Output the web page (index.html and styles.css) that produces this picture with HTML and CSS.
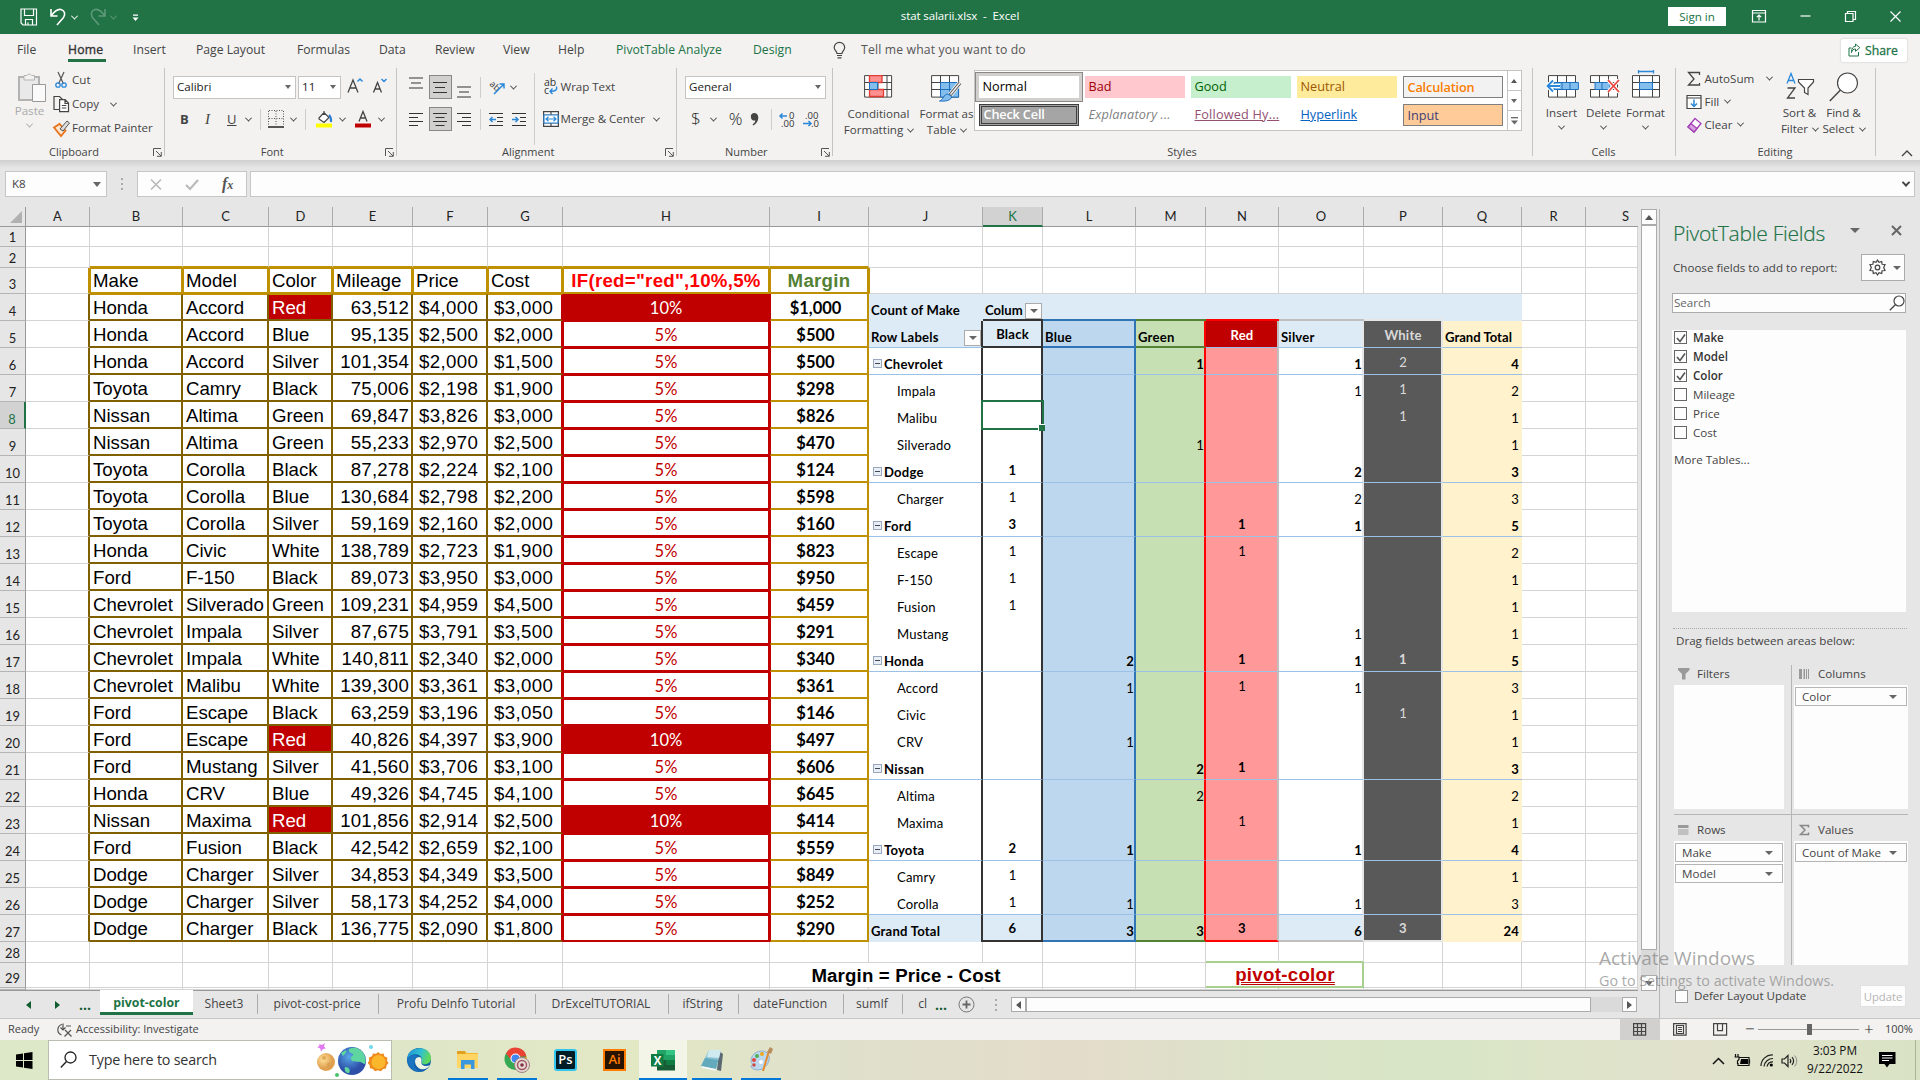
FILE: index.html
```html
<!DOCTYPE html>
<html lang="en">
<head>
<meta charset="utf-8">
<title>stat salarii.xlsx - Excel</title>
<link rel="stylesheet" href="styles.css">
</head>
<body>
<header class="titlebar">
  <div class="qat">
    <svg width="18" height="18" viewBox="0 0 18 18" class="ln"><path d="M1 1h15.5v16H3L1 15zM4.500 1v6.500h9V1M5.500 17v-5.500h7V17M8 14.500v2.500"/></svg>
    <svg width="17" height="18" viewBox="0 0 17 18" class="ln w15"><path d="M1 1v7h6.500M1 8C5 2.500 8 .8 11 1.500c4 1 4.500 5 2.500 8L7 17"/></svg>
    <i class="chev"></i>
    <svg width="17" height="18" viewBox="0 0 17 18" class="ln w15 dim"><path d="M16 1v7H9.500M16 8C12 2.500 9 .8 6 1.500 2 2.500 1.500 6.500 3.500 9.500L10 17"/></svg>
    <i class="chev dim"></i>
    <svg width="7" height="8" viewBox="0 0 7 8" class="qmore"><path d="M1 .5h5v1.300H1zM0.500 3.500h6l-3 3.500z" fill="#fff"/></svg>
  </div>
  <div class="doc">stat salarii.xlsx&nbsp; -&nbsp; Excel</div>
  <div class="winbtns">
    <span class="signin">Sign in</span>
    <svg width="14" height="13" viewBox="0 0 14 13" class="ln"><path d="M.5.500h13v11.500H.5zM.5 3h13M7 10.500V5M4.800 7.200L7 5l2.200 2.200"/></svg>
    <svg width="11" height="11" viewBox="0 0 11 11" class="ln"><path d="M.5 5h10"/></svg>
    <svg width="11" height="11" viewBox="0 0 11 11" class="ln"><path d="M.5 2.500h7.500v8H.5zM2.500 2.300V.500h8v8H8.200"/></svg>
    <svg width="11" height="11" viewBox="0 0 11 11" class="ln"><path d="M.5.500l10 10M10.500.500l-10 10"/></svg>
  </div>
</header>

<nav class="tabs">
  <span class="t-file">File</span><span class="t-home">Home</span><span class="t-insert">Insert</span><span class="t-page">Page Layout</span><span class="t-form">Formulas</span><span class="t-data">Data</span><span class="t-review">Review</span><span class="t-view">View</span><span class="t-help">Help</span><span class="t-pivot">PivotTable Analyze</span><span class="t-design">Design</span>
  <span class="t-tell"><svg width="13" height="17" viewBox="0 0 13 17"><path d="M4 11.500C4 9 1.200 8.500 1.200 5.500a5.200 5 0 0 1 10.500 0C11.700 8.500 9 9 9 11.500zM4 13.500h5M4.500 15.800h4" fill="none" stroke="#444" stroke-width="1.200"/></svg>Tell me what you want to do</span>
  <span class="share"><svg width="13" height="14" viewBox="0 0 13 14"><path d="M3.500 5H1v8h9.500V9M7.500 1l4.300 3.700-4.300 3.600V6C5.500 6 4 7 3.500 9.500c0-4 1.500-6 4-6.200z" fill="none" stroke="#217346"/></svg>Share</span>
</nav>

<section class="ribbon">
  <div class="group g-clip">
    <div class="clip-body">
      <div class="paste"><svg width="28" height="31" viewBox="0 0 28 31"><path d="M1 5h20v23H1z" fill="#e9e9e9" stroke="#b3b3b3" stroke-width="2"/><path d="M6 3.500h3a2.500 2.500 0 0 1 4.500 0h3V8H6z" fill="#f3f2f1" stroke="#b3b3b3"/><path d="M14.500 12.500h13v17h-13z" fill="#fafafa" stroke="#999"/></svg><span>Paste</span><i class="chev"></i></div>
      <div class="clip-list">
        <div><svg width="17" height="18" viewBox="0 0 17 18"><path d="M5 1l5.500 12M11 1L5.500 13" stroke="#555" stroke-width="1.200"/><circle cx="5" cy="14" r="2.200" fill="none" stroke="#2b88d8" stroke-width="1.300"/><circle cx="11" cy="14" r="2.200" fill="none" stroke="#2b88d8" stroke-width="1.300"/></svg>Cut</div>
        <div><svg width="17" height="18" viewBox="0 0 17 18"><path d="M6 14.500H1V1.500h5.500l3 3" fill="none" stroke="#444" stroke-width="1.200"/><path d="M6.600 4.600H12l3.500 3.500v8.500H6.600zM12 4.600V8.500h3.500M8.800 10.500h4.500M8.800 13h4.500" fill="#fff" stroke="#444" stroke-width="1.200"/></svg>Copy<i class="chev"></i></div>
        <div><svg width="17" height="18" viewBox="0 0 17 18"><path d="M1 8.500L6.500 5l6 6.500-4.500 5.500z" fill="#fbe6d2" stroke="#e8731a" stroke-width="1.800"/><path d="M7 10l7-8 2.500 2-6.500 8z" fill="#ddd" stroke="#555"/></svg>Format Painter</div>
      </div>
    </div>
    <footer class="has-launch">Clipboard<svg class="launch" width="9" height="9"><use href="#lnch"/></svg></footer>
  </div>

  <div class="group g-font">
    <div class="line1">
      <span class="combo c-name">Calibri<i class="caret"></i></span><span class="combo c-size">11<i class="caret"></i></span>
      <svg class="grow" width="16" height="17" viewBox="0 0 16 17"><path d="M1 15.500L6 3l5 12.500M2.800 11h6.400" fill="none" stroke="#444" stroke-width="1.300"/><path d="M10.500 4.500L13 2l2.500 2.500" class="bl"/></svg><svg class="shrink" width="16" height="17" viewBox="0 0 16 17"><path d="M1.500 15.500L5.500 5.500l4 10M3 12h5" fill="none" stroke="#444" stroke-width="1.300"/><path d="M9.500 2L12 4.500 14.500 2" class="bl"/></svg>
    </div>
    <div class="line2 font-row">
      <b>B</b><em>I</em><u>U</u><i class="chev"></i><s></s>
      <svg width="16" height="18" viewBox="0 0 16 18"><path d="M1 .5h14M1 8.500h14M.5 1v15M8 1v15M15.500 1v15" stroke="#555" stroke-dasharray="1 1.500" fill="none"/><path d="M0 17h16" stroke="#222" stroke-width="1.500"/></svg><i class="chev"></i><s class="wide"></s>
      <svg width="17" height="18" viewBox="0 0 17 18"><path d="M3 8l5-5.500 5 5L8 12.500 3 9zM8 5V1" fill="#fff" stroke="#444" stroke-width="1.200"/><path d="M13 5c2 2 2.500 3.500 2 7" stroke="#2b7cd3" stroke-width="2" fill="none"/><path d="M0 13.500h16v4H0z" fill="#ff0"/></svg><i class="chev"></i>
      <svg width="17" height="18" viewBox="0 0 17 18"><path d="M4 11.500L8 1.500l4 10M5.500 8h5.200" stroke="#444" stroke-width="1.300" fill="none"/><path d="M0 13.500h16v4H0z" fill="#c00000"/></svg><i class="chev"></i>
    </div>
    <footer class="has-launch">Font<svg class="launch" width="9" height="9"><use href="#lnch"/></svg></footer>
  </div>

  <div class="group g-align">
    <div class="al-left">
      <div class="line1 al-row">
        <span class="ab"><svg width="14" height="13"><path d="M0 1h14M2 6h10M0 11h14"/></svg></span><span class="ab on"><svg width="14" height="13"><path d="M0 1.500h14M2 6.500h10M0 11.500h14"/></svg></span><span class="ab low"><svg width="14" height="13"><path d="M0 1h14M2 6h10M0 11h14"/></svg></span><s></s>
        <svg class="orient" width="17" height="16" viewBox="0 0 17 16"><text x="1" y="7" font-size="9" transform="rotate(42 2 5)" fill="#333">ab</text><path d="M5 15L15 5M10.500 5H15v4.500" stroke="#2b88d8" stroke-width="1.500" fill="none"/></svg><i class="chev"></i>
      </div>
      <div class="line2 al-row">
        <span class="ab"><svg width="14" height="13"><path d="M0 .5h14M0 4.500h9M0 8.500h14M0 12.500h9"/></svg></span><span class="ab on"><svg width="14" height="13"><path d="M0 .5h14M2.500 4.500h9M0 8.500h14M2.500 12.500h9"/></svg></span><span class="ab"><svg width="14" height="13"><path d="M0 .5h14M5 4.500h9M0 8.500h14M5 12.500h9"/></svg></span><s></s>
        <svg class="ind" width="15" height="13"><path d="M0 .5h14M8 4.500h6M8 8.500h6M0 12.500h14"/><path d="M7 6.500H1M3.500 4L1 6.500 3.500 9" class="bl"/></svg><svg class="ind" width="15" height="13"><path d="M0 .5h14M8 4.500h6M8 8.500h6M0 12.500h14"/><path d="M0 6.500h6M3.500 4L6 6.500 3.500 9" class="bl"/></svg>
      </div>
    </div>
    <div class="al-right">
      <div class="line1"><svg width="16" height="18" viewBox="0 0 16 18"><text x="1" y="8" font-size="10.500" fill="#333">ab</text><text x="1" y="16" font-size="10.500" fill="#333">c</text><path d="M13.500 8.500c1 3-1 5-6 4.800M9.500 10.500l-2.500 2.700L9.500 16" fill="none" stroke="#2b88d8" stroke-width="1.400"/></svg>Wrap Text</div>
      <div class="line2"><svg width="16" height="16" viewBox="0 0 16 16"><path d="M.6.600h14.800v14.800H.6zM.6 4h14.800M.6 12h14.800M8 .6V4M8 12v3.400" fill="#fff" stroke="#444" stroke-width="1.200"/><path d="M1 4h14v8H1z" fill="#fff" stroke="#2b88d8" stroke-width="1.200"/><path d="M3 8h10M5.500 5.800L3 8l2.500 2.200M10.500 5.800L13 8l-2.500 2.200" fill="none" stroke="#2b88d8" stroke-width="1.200"/></svg>Merge &amp; Center<i class="chev"></i></div>
    </div>
    <footer class="has-launch">Alignment<svg class="launch" width="9" height="9"><use href="#lnch"/></svg></footer>
  </div>

  <div class="group g-num">
    <div class="line1"><span class="combo c-gen">General<i class="caret"></i></span></div>
    <div class="line2 num-row"><span class="sym">$</span><i class="chev"></i><span class="sym">%</span><svg class="comma" width="10" height="13" viewBox="0 0 10 13"><path d="M4 0c2.800 0 4.300 1.800 4.300 4.500 0 3.500-2 6.500-5 8l-.8-1c1.800-1.200 2.800-2.500 2.900-4A3.700 3.700 0 1 1 4 0z" fill="#444"/></svg><s></s>
    <svg width="16" height="17" viewBox="0 0 16 17"><text x="10" y="8" font-size="9.500" fill="#333">0</text><text x="2" y="16" font-size="9.500" fill="#333">.00</text><path d="M8 5H1M3.500 2.500L1 5l2.500 2.500" class="bl"/></svg>
    <svg width="16" height="17" viewBox="0 0 16 17"><text x="2" y="8" font-size="9.500" fill="#333">.00</text><text x="8" y="16" font-size="9.500" fill="#333">.0</text><path d="M0 12.500h8M5.500 10L8 12.500 5.500 15" class="bl"/></svg></div>
    <footer class="has-launch">Number<svg class="launch" width="9" height="9"><use href="#lnch"/></svg></footer>
  </div>

  <div class="group g-styles">
    <div class="big b-cond"><svg width="29" height="23" viewBox="0 0 29 23"><path d="M.6.600h27v21.500H.6zM.6 7.500h27M.6 14.500h27M5.500.6v21.500M14 .6v21.500M23 .6v21.500" fill="#fff" stroke="#444"/><path d="M5.500.6H18v6.900H5.500zM5.500 14.500h14v7h-14z" fill="#ff9090" stroke="#e03c31" stroke-width="1.300"/><path d="M5.500 7.500h8v7h-8z" fill="#83beec" stroke="#1e70c1"/></svg><span>Conditional</span><span>Formatting<i class="chev"></i></span></div>
    <div class="big b-table"><svg width="31" height="27" viewBox="0 0 31 27"><path d="M.6.600h27v21.500H.6zM.6 7.500h27M.6 14.500h27M9.500.6v21.500M18.500.6v21.500" fill="#fff" stroke="#444"/><path d="M9.500 7.500h18v14.600h-18zM9.500 14.500h18M18.500 7.500v14.600" fill="#83beec" stroke="#1e70c1"/><path d="M29 8L19 20" stroke="#fff" stroke-width="5"/><path d="M29 8L19 20" stroke="#555" stroke-width="3.500"/><path d="M29 8L19.500 19.500" stroke="#eee" stroke-width="1.500"/><path d="M17 19l3.500 2.500c0 4-6 5-12 4.500 4-1 4-7 8.500-7z" fill="#83beec" stroke="#1e70c1"/></svg><span>Format as</span><span>Table<i class="chev"></i></span></div>
    <div class="gallery">
      <div class="gal-cells">
        <span class="normal">Normal</span><span class="bad">Bad</span><span class="good">Good</span><span class="neutral">Neutral</span><span class="calc">Calculation</span>
        <span class="check">Check Cell</span><span class="expl">Explanatory ...</span><span class="foll">Followed Hy...</span><span class="hyper">Hyperlink</span><span class="input">Input</span>
      </div>
      <div class="gal-scroll"><span><i class="caret up"></i></span><span><i class="caret"></i></span><span class="more"><svg width="7" height="8"><path d="M0 .7h7" stroke="#666" stroke-width="1.300"/><path d="M0 3.500h7L3.500 7.500z" fill="#666"/></svg></span></div>
    </div>
    <footer>Styles</footer>
  </div>

  <div class="group g-cells">
    <div class="big"><svg width="33" height="28" viewBox="0 0 33 28"><path d="M2.500 5.600h27v21.500h-27zM2.500 12.500h27M2.500 19.500h27M11.500 5.600v21.500M20.500 5.600v21.500" fill="#fff" stroke="#444"/><path d="M8 12.500h24.400v7H8zM16 12.500v7M24 12.500v7" fill="#83beec" stroke="#1e70c1"/><path d="M14 16H1.500M7 10.500L1.500 16 7 21.500" fill="none" stroke="#fff" stroke-width="4"/><path d="M14 16H1.500M7 10.500L1.500 16 7 21.500" fill="none" stroke="#2b88d8" stroke-width="1.800"/></svg><span>Insert</span><i class="chev"></i></div>
    <div class="big"><svg width="33" height="28" viewBox="0 0 33 28"><path d="M2.500 5.600h27v21.500h-27zM2.500 12.500h27M2.500 19.500h27M11.500 5.600v21.500M20.500 5.600v21.500" fill="#fff" stroke="#444"/><path d="M7 12.500h15v7H7zM14 12.500v7" fill="#83beec" stroke="#1e70c1"/><path d="M0 13h6v6H0z" fill="#f3f2f1"/><path d="M20 10l11 12M31 10L20 22" stroke="#fff" stroke-width="4"/><path d="M20 10l11 12M31 10L20 22" stroke="#e8453c" stroke-width="1.800"/></svg><span>Delete</span><i class="chev"></i></div>
    <div class="big"><svg width="33" height="28" viewBox="0 0 33 28"><path d="M2.500 5.600h27v21.500h-27zM2.500 12.500h27M2.500 19.500h27M9.500 5.600v21.500M22.500 5.600v21.500" fill="#fff" stroke="#444"/><path d="M9.500 12.500h13v7h-13z" fill="#83beec" stroke="#1e70c1"/><path d="M8.500 1.500h15M8.500 0v3.500M23.500 0v3.500" stroke="#2b88d8" stroke-width="1.300"/></svg><span>Format</span><i class="chev"></i></div>
    <footer>Cells</footer>
  </div>

  <div class="group g-edit">
    <div class="edit-list">
      <div><svg width="17" height="16" viewBox="0 0 17 16"><path d="M13.500 4V1.500H2.500L8 8l-5.500 6h11V12" fill="none" stroke="#444" stroke-width="1.300"/></svg>AutoSum<i class="chev far"></i></div>
      <div><svg width="17" height="16" viewBox="0 0 17 16"><path d="M1 1.500h14v13H1zM1 4h14" fill="#fff" stroke="#444" stroke-width="1.200"/><path d="M8 5.500v7M5 9.500l3 3 3-3" fill="none" stroke="#2b88d8" stroke-width="1.500"/></svg>Fill<i class="chev"></i></div>
      <div><svg width="17" height="16" viewBox="0 0 17 16"><path d="M9 1.500l6 5-7 8.500-6-5z" fill="#fff" stroke="#a33fb5" stroke-width="1.300"/><path d="M5 6.500l6 5-3 3.500-6-5z" fill="#d7a1df" stroke="#a33fb5" stroke-width="1.300"/></svg>Clear<i class="chev"></i></div>
    </div>
    <div class="big e-sort"><svg width="30" height="28" viewBox="0 0 30 28"><path d="M2 11.500L6 1.500l4 10M3.500 8.500h5" fill="none" stroke="#2b88d8" stroke-width="1.300"/><path d="M2.500 16h7.500L2.500 26H10" fill="none" stroke="#444" stroke-width="1.300"/><path d="M13.500 7.500h15v2.500L23 16v6.500l-3.500-2V16l-6-6z" fill="#fff" stroke="#444" stroke-width="1.200"/></svg><span>Sort &amp;</span><span>Filter<i class="chev"></i></span></div>
    <div class="big e-find"><svg width="30" height="30" viewBox="0 0 30 30"><circle cx="18.500" cy="11" r="10" fill="#fff" stroke="#444" stroke-width="1.200"/><path d="M11.500 18L.8 29" stroke="#444" stroke-width="1.400"/></svg><span>Find &amp;</span><span>Select<i class="chev"></i></span></div>
    <footer>Editing</footer>
  </div>
  <svg class="collapse" width="12" height="8"><path d="M1 7l5-5 5 5" fill="none" stroke="#444" stroke-width="1.400"/></svg>
</section>

<section class="fbar">
  <span class="namebox">K8<i class="caret"></i></span><span class="dots"></span>
  <span class="fx"><svg width="12" height="11"><path d="M1 .5l10 10M11 .5l-10 10" stroke="#bbb" stroke-width="1.700"/></svg><svg width="14" height="11"><path d="M1 6l4 4L13 1" fill="none" stroke="#bbb" stroke-width="2.200"/></svg><em>f<small>x</small></em></span>
  <span class="finput"><i class="chev"></i></span>
</section>

<main class="main">
  <div class="left">
    <div class="sheetwrap">
      <div class="sheet" id="sheet"></div>
      <div class="vscroll"><span class="sbtn"><i class="caret up"></i></span><span class="thumb"></span><span class="track"></span><span class="sbtn"><i class="caret"></i></span></div>
    </div>
    <div class="sheettabs">
      <i class="tri l"></i><i class="tri r"></i><span class="ell">...</span>
      <span class="st on s1">pivot-color</span><span class="st s2">Sheet3</span><span class="st s3">pivot-cost-price</span><span class="st s4">Profu DeInfo Tutorial</span><span class="st s5">DrExcelTUTORIAL</span><span class="st s6">ifString</span><span class="st s7">dateFunction</span><span class="st s8">sumIf</span><span class="st s9">cl</span><span class="ell e2">...</span>
      <svg width="17" height="17" class="plus"><circle cx="8.500" cy="8.500" r="7.500" fill="none" stroke="#777"/><path d="M8.500 4.500v8M4.500 8.500h8" stroke="#666" stroke-width="1.800"/></svg>
      <span class="dots"></span>
      <div class="hscroll"><span class="sbtn"><i class="tri l g"></i></span><span class="thumb"></span><span class="track"></span><span class="sbtn"><i class="tri r g"></i></span></div>
    </div>
  </div>
  <aside class="panel">
    <div class="p-title"><span>PivotTable Fields</span><i class="caret lg"></i><svg width="11" height="11"><path d="M1 1l9 9M10 1l-9 9" stroke="#666" stroke-width="2"/></svg></div>
    <div class="p-choose"><span>Choose fields to add to report:</span><span class="gear"><svg width="17" height="17" viewBox="0 0 17 17"><path d="M8.500 1l1.500 2.300 2.700-.8.400 2.800 2.900.2-1.300 3 1.300 3-2.900.2-.4 2.800-2.700-.8L8.500 16 7 13.700l-2.700.8-.4-2.800-2.900-.2 1.300-3-1.300-3 2.900-.2.400-2.800 2.700.8z" fill="none" stroke="#444" stroke-width="1.200"/><circle cx="8.500" cy="8.500" r="2.300" fill="none" stroke="#444" stroke-width="1.200"/></svg><i class="caret"></i></span></div>
    <div class="p-search">Search<svg width="16" height="16"><circle cx="10" cy="6" r="5" fill="none" stroke="#444" stroke-width="1.200"/><path d="M6.500 9.500L.8 15.300" stroke="#444" stroke-width="1.300"/></svg></div>
    <div class="p-list" id="fields"></div>
    <div class="p-drag">Drag fields between areas below:</div>
    <div class="areas">
      <div class="area a1"><h4><svg width="12" height="12"><path d="M0 0h11.500v2L7.500 6v5.500H4V6L0 2z" fill="#999"/></svg>Filters</h4><div class="box"></div></div>
      <div class="area a2"><h4><svg width="12" height="12"><path d="M0 1h3v10H0zM4.500 1H6v10H4.500zM7 1h1v10H7zM9 1h1v10H9z" fill="#999"/></svg>Columns</h4><div class="box"><span class="pill">Color<i class="caret"></i></span></div></div>
      <div class="area a3"><h4><svg width="12" height="12"><path d="M0 1h10.500v3H0zM0 5.500h10.500v1H0zM0 7.500h10.500v1H0zM0 9.500h10.500v1H0z" fill="#999"/></svg>Rows</h4><div class="box"><span class="pill">Make<i class="caret"></i></span><span class="pill">Model<i class="caret"></i></span></div></div>
      <div class="area a4"><h4><svg width="12" height="12"><path d="M9.500 3.500V1.500h-8L6 6l-4.500 4.500h8v-2" fill="none" stroke="#888" stroke-width="1.500"/></svg>Values</h4><div class="box"><span class="pill">Count of Make<i class="caret"></i></span></div></div>
    </div>
    <div class="p-defer"><i class="cb"></i>Defer Layout Update<span>Update</span></div>
  </aside>
</main>

<div class="status">
  <span class="ready">Ready</span>
  <svg width="15" height="14" viewBox="0 0 15 14"><path d="M5 1.500A5.500 5.500 0 0 0 4.500 12M6 .5v6.500M3.500 4.500L6 7l2.500-2.500M8 7l6.500 6.500M14 7L7.500 13.500M9 3h5" fill="none" stroke="#555" stroke-width="1.200"/></svg>
  <span class="acc">Accessibility: Investigate</span>
  <span class="vw on"><svg width="14" height="13"><path d="M.6.600h12v11.500H.6zM4.500.600v11.500M8.500.600v11.500M.6 4.500h12M.6 8.500h12"/></svg></span>
  <span class="vw"><svg width="14" height="13"><path d="M.6.600h12.500v11.500H.6zM3.500 2.500h7v8h-7zM5 4.500h4M5 6.500h4M5 8.500h4"/></svg></span>
  <span class="vw"><svg width="15" height="13"><path d="M.6.600h13v11.500H.6zM4.500.600v7h5v-7M4.500 7.500"/></svg></span>
  <span class="zm">−</span><span class="slider"><i></i></span><span class="zm">+</span><span class="pct">100%</span>
</div>

<div class="taskbar">
  <span class="start"><svg width="17" height="17" viewBox="0 0 17 17"><path d="M0 2.500l7-1v6.500H0zM8 1.300L16.500 0v8H8zM0 9h7v6.500l-7-1zM8 9h8.500v8L8 15.700z" fill="#000"/></svg></span>
  <span class="search">
    <svg width="17" height="18"><circle cx="10.500" cy="6.500" r="5.500" fill="none" stroke="#222" stroke-width="1.300"/><path d="M6.500 10.500L.8 16.500" stroke="#222" stroke-width="1.400"/></svg>
    <span>Type here to search</span>
    <svg class="planets" width="74" height="38" viewBox="0 0 74 38">
      <defs><radialGradient id="mo" cx=".35" cy=".35"><stop offset="0" stop-color="#ffe29a"/><stop offset="1" stop-color="#e0a050"/></radialGradient><radialGradient id="ea" cx=".4" cy=".35"><stop offset="0" stop-color="#58a8e8"/><stop offset="1" stop-color="#2d4fa8"/></radialGradient></defs>
      <circle cx="10" cy="21" r="9" fill="url(#mo)"/><circle cx="8" cy="17" r="2" fill="#e2ab58"/><circle cx="13" cy="24" r="2.200" fill="#dba050"/>
      <circle cx="36" cy="20" r="14" fill="url(#ea)"/><path d="M33 8c6-3 12 0 15 5 2 4 2 8 1 10-3 0-4-3-7-2-3-2-6 1-7-3-1-3 3-3 2-5-2-1-5-2-4-5zM25 12l5-3c1 2-1 4-3 6zM29 26c4 0 6 3 4 6-3 0-5-2-4-6z" fill="#5fd6a0"/>
      <path d="M62 11l2.500 2 3-.5 1 3 3 1.200-.5 3 1.500 2.300-2 2.500-.5 3-3 .5-2 2.200-3-1-3 1-2-2.200-3-.8-.3-3-2-2.200 1.500-2.500-.3-3 3-1.200 1.200-2.800 3 .3z" fill="#ef8a1d"/><circle cx="62.500" cy="21" r="7" fill="#fbb72c"/>
      <path d="M3 3l3 1 3-2-1 3.500 2 2-3 .5-2 2.500-.8-3L1 6l2.500-1z" fill="#e07af0"/><circle cx="55" cy="6" r="2" fill="#70d8e8"/><circle cx="21" cy="34" r="2" fill="#45c46c"/>
    </svg>
  </span>
  <span class="app"><svg width="26" height="26" viewBox="0 0 26 26"><defs><linearGradient id="ed" x1="0" y1="0" x2="1" y2=".3"><stop offset="0" stop-color="#1e8fd8"/><stop offset=".6" stop-color="#30c0d0"/><stop offset="1" stop-color="#5fd85c"/></linearGradient></defs><circle cx="13" cy="13" r="12" fill="#1260a8"/><path d="M1 12C2-1 24-3 25 11c0 5-4 7-8 6-3-1-1-2-1-4 0-7-11-8-15-1z" fill="url(#ed)"/><path d="M9 14c0-3 2-4 4-4 2 0 3 2 2.500 4-1.500 5 5 6 8.500 4-5 8-15 4-15-4z" fill="#eef4e4"/><path d="M9 14c-3 5 2 11 9 10-8 3-16-3-17-11 2-5 8-6 12-3-2 0-4 1-4 4z" fill="#1b74c0"/></svg></span>
  <span class="app run"><svg width="24" height="22" viewBox="0 0 24 22"><path d="M1 2h8l2 2h11v14H1z" fill="#f5b82e"/><path d="M1 5h21v14H1z" fill="#ffd566"/><path d="M1 2h8v3H1z" fill="#e0a020"/><path d="M5 11h13.500v9H15v-4.500H8.500V20H5z" fill="#3a96dd"/></svg></span>
  <span class="app run"><svg width="26" height="26" viewBox="0 0 26 26"><circle cx="11.500" cy="12" r="11" fill="#34a853"/><path d="M2 6.500a11 11 0 0 1 20.500 3H11.500L7 13z" fill="#ea4335"/><path d="M22.500 9.500A11 11 0 0 1 11.500 23l5-8.500z" fill="#fbbc05"/><circle cx="11.500" cy="11.500" r="5" fill="#fff"/><circle cx="11.500" cy="11.500" r="4" fill="#4285f4"/><circle cx="18" cy="18" r="7.500" fill="#e6dcd8" stroke="#a08080"/><circle cx="18" cy="18" r="4.500" fill="none" stroke="#a05560" stroke-width="1.500"/><circle cx="18" cy="18" r="1.800" fill="#803040"/></svg></span>
  <span class="app"><span class="adobe ps">Ps</span></span>
  <span class="app"><span class="adobe ai">Ai</span></span>
  <span class="app run active"><svg width="25" height="23" viewBox="0 0 25 23"><path d="M6 1h9v10H6z" fill="#21a366"/><path d="M15 1h9v5h-9z" fill="#33c481"/><path d="M15 6h9v5h-9z" fill="#21a366"/><path d="M6 11h9v10H6z" fill="#185c37"/><path d="M15 11h9v5h-9z" fill="#107c41"/><path d="M6 16h18v5.500H6z" fill="#185c37"/><path d="M0 5h12.500v12.500H0z" fill="#107c41"/><text x="2.800" y="15.500" font-size="11.500" font-weight="700" fill="#fff">X</text></svg></span>
  <span class="app run"><svg width="26" height="26" viewBox="0 0 26 26"><path d="M20 4l4 3-2 17-4-1z" fill="#5b6a72"/><path d="M10 3h12l-5 19L2 19z" fill="#8cc4d4"/><path d="M10 3h12l-2 8-12-1z" fill="#cfeaf0"/><path d="M6 11l13 2-2 9-15-3z" fill="#63aabd"/><path d="M2 19l15 3v2L3 21z" fill="#f4f7f8"/></svg></span>
  <span class="app run"><svg width="26" height="26" viewBox="0 0 26 26"><path d="M3 14C3 6 12 2 18 5c6 4 3 12-2 16-6 4-13 1-13-2 3-1 0-3 0-5z" fill="#bcd8ee" stroke="#8fb0cc"/><circle cx="6" cy="13" r="2" fill="#e04840"/><circle cx="9" cy="9" r="2" fill="#50b050"/><circle cx="14" cy="7" r="2" fill="#f0a820"/><circle cx="6" cy="18" r="1.700" fill="#d04840"/><circle cx="13" cy="15" r="2" fill="#fff"/><path d="M21 4l-6 20" stroke="#e58a2b" stroke-width="2"/><path d="M19 5l3-5 3 2-2 5z" fill="#b98d5c"/></svg></span>
  <span class="tray">
    <svg width="13" height="8"><path d="M1 7l5.500-5.500L12 7" fill="none" stroke="#111" stroke-width="1.500"/></svg>
    <svg width="17" height="13" viewBox="0 0 17 13"><path d="M5 3.500h10v8H4V9M15.500 5.500v4" fill="none" stroke="#111" stroke-width="1.200"/><path d="M7 5h7v5H6z"/><path d="M1.500 0v3M4 0v3M.5 3H5v2.500L3.500 7v3" fill="none" stroke="#111" stroke-width="1.200"/></svg>
    <svg width="14" height="13" viewBox="0 0 14 13"><path d="M1 12A11 11 0 0 1 13 1M4 12.500A9 9 0 0 1 13 4.500M7 12.500A6 6 0 0 1 13 7.800" fill="none" stroke="#222" stroke-width="1.200"/><circle cx="11.300" cy="11" r="1.600"/></svg>
    <svg width="17" height="14" viewBox="0 0 17 14"><path d="M1 5h2.500L7 1.500v11L3.500 9H1zM9 5c1 1.500 1 3 0 4M11 3c2 2.500 2 5.500 0 8" fill="none" stroke="#222" stroke-width="1.200"/><path d="M13.500 1.500c3 3.500 3 7.500 0 11" fill="none" stroke="#888"/></svg>
    <span class="clock">3:03 PM<br>9/22/2022</span>
    <svg width="17" height="16" viewBox="0 0 17 16"><path d="M0 0h16.500v12H10.500L8 15.500 5.500 12H0z"/><path d="M3 3.500h10.500M3 6h10.500M3 8.500h7" stroke="#fff"/></svg>
  </span>
</div>
<div class="watermark"><b>Activate Windows</b><span>Go to Settings to activate Windows.</span></div>
<svg width="0" height="0" class="defs"><symbol id="lnch" viewBox="0 0 9 9"><path d="M.5 8V.5H8M3 3l5 5M8.300 4v4.300H4" fill="none" stroke="#555"/></symbol></svg>
<script src="app.js"></script>
</body>
</html>
```
FILE: styles.css
```css
*{box-sizing:border-box}
body{margin:0;width:1920px;height:1080px;overflow:hidden;font:11.6px/16px "Open Sans","Noto Sans",sans-serif;color:#444;background:#e6e6e6;position:relative}
svg{display:block;flex:none;overflow:visible}
span,b,em,u{white-space:nowrap}
.defs{position:absolute}
.ln path{fill:none;stroke:#fff;stroke-width:1.2}
.ln.w15 path{stroke-width:1.6}
.dim{opacity:.28}
.bl{fill:none;stroke:#2b88d8;stroke-width:1.5}
.chev{display:inline-block;width:5px;height:5px;border:solid #444;border-width:0 1.4px 1.4px 0;transform:rotate(45deg) translate(-1px,-1px);flex:none}
.caret{display:inline-block;border:solid transparent;border-width:4px 3px 0;border-top-color:#666;flex:none}
.caret.up{border-width:0 4px 5px;border-bottom-color:#555}
.caret.lg{border-width:5px 5px 0;border-top-color:#666}

.titlebar{height:34px;background:#217346;color:#fff;display:grid;grid-template-columns:640px 640px 640px;align-items:center}
.qat{display:flex;align-items:center;padding-left:20px}
.qat svg:nth-child(2){margin-left:12px}
.qat .chev{margin:0 2px 0 5px;border-color:#fff}
.qat svg:nth-child(4){margin-left:10px}
.qat .qmore{margin:2px 0 0 14px}
.doc{text-align:center;font-size:11.5px;margin-top:-2px;letter-spacing:-.1px}
.winbtns{display:flex;align-items:center;padding-left:388px;margin-top:-2px}
.signin{background:#fff;color:#217346;width:58px;height:19px;line-height:19px;text-align:center;margin-right:26px;flex:none}
.winbtns svg{margin-right:34px}
.winbtns svg:last-child{margin-right:0}

.tabs{height:32px;background:#f3f2f1;display:flex;align-items:center;font-size:12.2px;padding-left:17px}
.tabs span{height:32px;line-height:32px;flex:none}
.t-file{width:51px}.t-home{width:65px;color:#333;-webkit-text-stroke:.35px;letter-spacing:.2px;background:linear-gradient(#217346,#217346) 0 25px/38px 3px no-repeat}.t-insert{width:63px}.t-page{width:101px}.t-form{width:82px}.t-data{width:56px}.t-review{width:68px}.t-view{width:55px}.t-help{width:58px}.t-pivot{width:137px;color:#217346}.t-design{width:80px;color:#217346}
.t-tell{display:flex;align-items:center;gap:15px;width:1008px;color:#555;letter-spacing:.17px}
.tabs .share{width:66px;height:23px;line-height:23px;background:#fff;border-radius:2px;box-shadow:0 0 2px #bbb;display:flex;align-items:center;gap:4px;padding-left:7px;color:#217346;-webkit-text-stroke:.3px}

.ribbon{height:94px;background:#f3f2f1;display:flex;position:relative}
.group{position:relative;height:88px;border-right:1px solid #c6c4c2;margin-top:2px;flex:none;display:flex}
.group footer{position:absolute;left:0;right:0;bottom:-4px;text-align:center;font-size:11px;line-height:16px}
.group footer.has-launch{padding-right:16px}
.launch{position:absolute;right:2px;bottom:3px}
.group s{width:1px;height:21px;background:#d0cecc}
.line1,.line2{display:flex;align-items:center;height:24px}
.line2{margin-top:8px}
.g-clip{width:165px}
.clip-body{display:flex}
.paste{width:53px;display:flex;flex-direction:column;align-items:center;padding:4px 0 0 6px;color:#aaa}
.paste svg{margin-left:5px}
.paste .chev{border-color:#aaa;margin-top:4px}
.clip-list div{display:flex;align-items:center;height:24px;gap:2px}
.clip-list .chev{margin-left:10px}
.g-font{width:231.500px;display:block;padding:7px 0 0 8px}
.combo{height:23px;background:#fff;border:1px solid #c6c4c2;padding:0 4px 0 3px;display:flex;align-items:center;justify-content:space-between;color:#222}
.c-name{width:123px}.c-size{width:43px;margin-left:2px}.c-gen{width:141px;padding-right:4px}
.grow{margin:-4px 0 0 6px}.shrink{margin:-4px 0 0 9px}
.font-row>*{flex:none}
.font-row b{margin-left:7px;width:25px;font-size:13px}.font-row em{width:22px;font:italic 15px "Liberation Serif",serif}.font-row u{width:19px;font-size:13px}
.font-row s{margin:0 7px 0 9px}.font-row s.wide{margin-right:10px}
.font-row svg+.chev{margin-left:7px}.font-row .chev+svg{margin-left:10px}
.g-align{width:280.500px;padding:7px 0 0 7px}
.al-left{width:131px;border-right:1px solid #d0cecc;height:72px;margin-top:-2px;padding-top:2px}
.ab{width:24px;height:23px;display:flex;align-items:center;justify-content:center}
.ab.on{background:#d2d0ce;border:1px solid #8a8886;height:24px;width:23px;margin-left:1px}
.ab.low svg{margin-top:11px}
.line1 .ab:first-child svg{margin-top:-7px}
.ab svg path,.ind path{stroke:#333;fill:none;stroke-width:1.2}
.ind path.bl{stroke:#2b88d8;stroke-width:1.5}
.al-row s{margin:0 8px 0 4px}.al-row .chev{margin-left:5px}
.al-row .ind+.ind{margin-left:8px}
.al-right{padding-left:8px;letter-spacing:-.05px}.al-right svg{margin-right:2px}.al-right .chev{margin-left:9px}
.g-num{width:155.500px;padding:7px 0 0 8px;display:block}
.num-row .sym{font-size:17px;font-weight:300;color:#222}
.num-row{padding-left:6px}.num-row .chev{margin:0 13px 0 10px}.num-row svg{margin-left:5px}.num-row .comma{margin-left:8px}.num-row s{margin:0 2px 0 11px}.num-row svg+svg{margin-left:8px}
.big{display:flex;flex-direction:column;align-items:center;line-height:16px}
.big span{display:flex;align-items:center;height:16px}
.big span .chev{margin-left:5px}
.b-cond{width:88px;padding-top:6px;margin-left:2px}.b-table{width:52px;padding-top:6px;margin-left:-2px;margin-right:1px}
.b-cond svg{margin:1px 0 8px 0}.b-table svg{margin:1px 0 4px}
.g-styles{width:700px}
.gallery{margin:2px 0 0 0;width:548px;height:61px;border:1px solid #c6c4c2;background:#fff;display:flex}
.gal-cells{flex:1;display:grid;grid-template-columns:repeat(5,100px);gap:6px;padding:5px 0 0 4px;grid-auto-rows:22px;font-size:12.7px}
.gal-cells span{line-height:20px;padding-left:4px}
.normal{outline:3px solid #d2d0ce;box-shadow:0 0 0 4px #8a8886;color:#000;outline-offset:0}
.bad{background:#ffc7ce;color:#9c0006}.good{background:#c6efce;color:#006100}.neutral{background:#ffeb9c;color:#9c5700}
.calc{background:#f2f2f2;color:#fa7d00;border:1px solid #7f7f7f;font-weight:600;letter-spacing:-.15px}
.check{background:#a5a5a5;color:#fff;border:3px double #3f3f3f;font-weight:600;line-height:15px!important;padding-left:2px!important;letter-spacing:-.15px}
.expl{color:#7f7f7f;font-style:italic;letter-spacing:.15px}.foll{color:#954f72;text-decoration:underline;letter-spacing:.2px}.hyper{color:#0563c1;text-decoration:underline}
.input{background:#fc9;color:#3f3f76;border:1px solid #7f7f7f}
.gal-scroll{width:14px;display:flex;flex-direction:column}
.gal-scroll span{flex:1;border-left:1px solid #c6c4c2;border-bottom:1px solid #c6c4c2;display:flex;align-items:center;justify-content:center}
.gal-scroll .more{border-bottom:0}
.gal-scroll .up{border-width:0 3px 4px}
.g-cells{width:143px;padding:2px 0 0 8px}
.g-cells .big{width:42px}.g-cells .big svg{margin-bottom:7px;margin-right:-1px}.g-cells .chev{margin-top:4px}
.g-edit{width:200px;padding:0 0 0 10px}
.edit-list{width:93px;margin-top:-1px}.edit-list div{display:flex;align-items:center;height:23px;gap:2px}
.edit-list .chev{margin-left:4px}.edit-list .far{margin-left:11px}
.e-sort{width:42px;padding:4px 0 0 0}.e-find{width:46px;padding-top:4px}
.e-sort svg{margin-bottom:5px;margin-top:0}.e-find svg{margin:0 0 3px}
.collapse{margin:83px 0 0 25px}

.fbar{height:47px;display:flex;align-items:flex-start;padding:11px 5px 0;background:linear-gradient(#cfcfcf,#e6e6e6 8px)}
.fbar>span{height:26px;background:#fdfdfd;border:1px solid #c6c6c6;display:flex;align-items:center}
.namebox{width:102px;padding:0 5px 0 6px;justify-content:space-between}
.fbar .namebox .caret{border-width:5px 4px 0}
.fbar>.dots{border:0;background:none}
.dots{width:30px;background:none}
.dots::before{content:"";width:2px;height:12px;margin-left:14px;background:repeating-linear-gradient(#aaa 0 2px,transparent 2px 5px)}
.fx{width:110px;padding-left:12px;gap:23px}.fx em{font:italic bold 16px "Liberation Serif",serif;color:#555}.fx small{font-size:12px}
.finput{width:1665px;margin-left:3px;justify-content:flex-end;padding-right:5px}
.finput .chev{border-width:0 2px 2px 0;width:6px;height:6px}

.main{height:811px;display:flex}
.left{width:1659px}
.sheetwrap{height:784px;display:flex}
.sheet{width:1638px;height:784px;position:relative;display:grid;grid-template-columns:26px 64px 93px 86px 64px 80px 75px 75px 207px 99px 114px 60px 93px 70px 73px 85px 79px 79px 64px 52px;grid-template-rows:20px 20px 21px 26px repeat(24,27px) 21px 25px 2px;background:#fff;border-right:1px solid #999;border-bottom:1px solid #999;font-family:Lato,sans-serif;font-size:12.9px;color:#000;overflow:visible}
.sheet>div{min-width:0;overflow:hidden;white-space:nowrap;display:flex;border-right:1px solid #d4d4d4;border-bottom:1px solid #d4d4d4}
.sheet>.ch{background:#e6e6e6;border-right:1px solid #ababab;border-bottom:1px solid #999;justify-content:center;align-items:center;font-size:13px;color:#222;padding-bottom:2px}
.sheet>.ch.c-S{justify-content:flex-end;padding-right:9px;border-right:0}
.sheet>.ch.c-K{background:#d2d2d2;color:#217346;border-bottom:2px solid #217346;padding-bottom:1px}
.sheet>.rh{background:#e6e6e6;border-right:1px solid #999;border-bottom:1px solid #b5b5b5;justify-content:center;align-items:flex-end;font-size:12.9px;line-height:17px;color:#222}
.sheet>.rh.r8{background:#d2d2d2;color:#217346;border-right:2px solid #217346}
.sheet>.corner{background:#e6e6e6;border-color:#999;align-items:flex-end;justify-content:flex-end;padding:0 3px 3px 0}
.corner i{border:solid transparent;border-width:0 0 12px 12px;border-bottom-color:#b1b1b1}

.sheet>.src{font:18.67px/24px "Liberation Sans",sans-serif;border:solid #806000;border-width:0 2px 2px 0;align-items:center;padding:2px 0 0 3px}
.sheet>.src.c-E{justify-content:flex-end;padding-right:2px;letter-spacing:.2px}
.sheet>.src.c-F,.sheet>.src.c-G{justify-content:flex-start;padding-left:6px;letter-spacing:.35px}
.sheet>.pre{border-right:2px solid #806000}
.sheet>.src.c-G{border-right-color:#c00000}
.sheet>.src.red{background:#c00000;color:#fff}
.sheet>.hb{border-bottom:2px solid #bf9000}
.sheet>.hd{font:18.67px/22px "Liberation Sans",sans-serif;border:solid #bf9000;border-width:1px 2px 2px 1px;align-items:center;padding:1px 0 0 2px}
.sheet>.hd.c-H,.sheet>.hd.c-I{font-weight:700;justify-content:center;padding:1px 0 0;letter-spacing:.28px}
.hd.c-H{color:#f00}.hd.c-I{color:#548235}
.sheet>.pre.r3{border-right-color:#bf9000}
.sheet>.src.r4{border-top:1px solid #bf9000}
.sheet>.fh{font-size:16.500px;color:#c00000;border:solid #c00000;border-width:1px 2px 2px 1px;align-items:center;justify-content:center;padding-top:2px}
.sheet>.fh.red{background:#c00000;color:#fff}
.sheet>.mg{font-size:16.500px;font-weight:700;border:solid #bf9000;border-width:0 2px 2px 1px;border-left-color:#c00000;align-items:center;justify-content:center;padding:2px 7px 0 0}
.sheet>.r3.c-J{border-left:1px solid #bf9000}

.sheet>.pv{border:0;align-items:flex-end;line-height:16px;padding-bottom:3px;font-size:13.1px;letter-spacing:.15px}
.sheet>.pv.bold{font-weight:700;letter-spacing:.2px}
.sheet>.pv.ul{border-bottom:1px solid #9bc2e6;padding-bottom:2px}
.pv.c-J{padding-left:28px}.sheet>.pv.c-J.bold{padding-left:2px}
.pv.c-L,.pv.c-M,.pv.c-O,.pv.c-Q{justify-content:flex-end}
.pv.c-Q{padding-right:3px}
.sheet>.pv.c-K,.sheet>.pv.c-N,.sheet>.pv.c-P{justify-content:center;align-items:center;padding:1px 0 0 1px}
.sheet>.pv.c-J{border-right:2px solid #333}
.sheet>.pv.c-K{border-right:2px solid #333}
.sheet>.pv.c-L{background:#bdd7ee;border-right:2px solid #2f75b5}
.sheet>.pv.c-M{background:#c6e0b4;border-right:2px solid #f00}
.sheet>.pv.c-N{background:#f99;border-right:2px solid #bfbfbf}
.sheet>.pv.c-O{border-right:2px solid #e7e6e6}
.sheet>.pv.c-P{background:#595959;color:#d9d9d9;border-right:2px solid #e7e6e6}
.sheet>.pv.c-Q{background:#fff2cc}
.sheet>.pv.r5.c-L,.sheet>.pv.r5.c-M,.sheet>.pv.r5.c-O,.sheet>.pv.r5.c-Q{justify-content:flex-start;padding-left:2px}
.sheet>.pv.r5.c-Q{letter-spacing:0;padding-right:0}
.sheet>.pv.r5.c-L{border-bottom:2px solid #2f75b5;padding-bottom:1px}.sheet>.pv.r5.c-M{border-bottom:2px solid #548235;padding-bottom:1px}.sheet>.pv.r5.c-K{border-bottom:2px solid #333}
.sheet>.pv.r5.c-N{background:#c00000;color:#fff}
.sheet>.pv.r5.c-J,.sheet>.pv.r5.c-K,.sheet>.pv.r5.c-O,.sheet>.pv.r27.c-J,.sheet>.pv.r27.c-K,.sheet>.pv.r27.c-O{background:#ddebf7}
.sheet>.pv.r4{background:#ddebf7;border-right:0;border-bottom:0;justify-content:flex-start;align-items:flex-end;padding:0 0 3px 2px}
.sheet>.pv.r4.c-K{border-bottom:2px solid #333;padding-bottom:0}.sheet>.pv.r4.c-L{border-bottom:2px solid #2f75b5}.sheet>.pv.r4.c-M{border-bottom:2px solid #548235}.sheet>.pv.r4.c-N{border-bottom:2px solid #f00}.sheet>.pv.r4.c-O{border-bottom:2px solid #bfbfbf}.sheet>.pv.r4.c-P{border-bottom:2px solid #e7e6e6}
.sheet>.pv.r27.c-K{border-bottom:2px solid #333}.sheet>.pv.r27.c-L{border-bottom:2px solid #2f75b5}.sheet>.pv.r27.c-M{border-bottom:2px solid #548235}.sheet>.pv.r27.c-N{border-bottom:2px solid #f00}.sheet>.pv.r27.c-O{border-bottom:2px solid #bfbfbf}.sheet>.pv.r27.c-P{border-bottom:2px solid #e7e6e6}
.sheet>.pv.r27.c-L,.sheet>.pv.r27.c-M,.sheet>.pv.r27.c-O{padding-bottom:1px}
.exp{width:9px;height:9px;border:1px solid #9aa7bd;background:linear-gradient(#445 0 0) center/5px 1px no-repeat,#e8eef6;margin:0 2px 4px 2px;flex:none}
.dd{width:17px;height:16px;background:#fdfdfd;border:1px solid #ababab;display:flex;align-items:center;justify-content:center;margin-left:auto;flex:none}
.dd .caret{border-width:4px 4px 0}
.sheet>.pv.r4.c-K .dd{margin-left:0}
.sheet>.pv.r4.c-K .clip{width:40px;overflow:hidden;letter-spacing:0;margin-bottom:1px;flex:none}
.sheet>.pv.r5.c-J .dd{margin-bottom:-1px}
.sheet>.note{grid-column:span 3;font:bold 18.67px/22px "Liberation Sans",sans-serif;align-items:center;justify-content:center;letter-spacing:.15px;padding-top:1px}
.sheet>.link{grid-column:span 2;font:bold 18.67px/22px "Liberation Sans",sans-serif;color:#c00000;align-items:center;justify-content:center;border-bottom:2px solid #a9d08e;border-right:2px solid #a9d08e;text-decoration:underline double;padding-left:2px;letter-spacing:.3px}
.sheet>.r28.c-N,.sheet>.r28.c-O{border-bottom:2px solid #a9d08e}
.sheet>.cursor{position:absolute;left:981px;top:193px;width:63px;height:30px;border:2px solid #217346;overflow:visible}
.cursor::after{content:"";position:absolute;right:-3px;bottom:-3px;width:6px;height:6px;background:#217346;border:solid #fff;border-width:1px 0 0 1px}

.vscroll{width:16px;margin:2px 0 0 3px;display:flex;flex-direction:column}
.sbtn{width:16px;height:16px;background:#fdfdfd;border:1px solid #ababab;display:flex;align-items:center;justify-content:center;flex:none}
.vscroll .caret:not(.up){border-width:5px 4px 0}
.vscroll .thumb{height:725px;background:#fdfdfd;border:1px solid #ababab}.vscroll .track{flex:1;background:#dadada}
.sheettabs{height:27px;display:flex;align-items:center;background:#e6e6e6;font-size:12.1px}
.tri{border:solid transparent;border-width:4px 4px;display:inline-block;flex:none}
.tri.l{border-width:4px 5px 4px 0;border-right-color:#0f5c2e;margin-left:26px}.tri.r{border-width:4px 0 4px 5px;border-left-color:#0f5c2e;margin-left:24px}
.tri.g{margin:0}.tri.g.l{border-right-color:#555}.tri.g.r{border-left-color:#555}
.ell{color:#0f5c2e;font-weight:700;margin-left:19px;width:21px;font-size:14px;line-height:14px}
.st{height:20px;line-height:19px;border-right:1px solid #ababab;text-align:center;margin-bottom:1px;padding-right:2px}
.st.on{height:25px;line-height:25px;background:#fff;border:0;border-bottom:3px solid #217346;color:#217346;font-weight:700;font-size:12.3px;align-self:flex-start;margin-top:-1px;position:relative;padding:0}
.s1{width:93px}.s2{width:65px}.s3{width:121px}.s4{width:157px}.s5{width:133px}.s6{width:70px}.s7{width:105px}.s8{width:59px}.s9{width:24px;border:0;text-align:right;padding:0}
.e2{margin-left:8px;width:20px}
.plus{margin-left:3px}
.sheettabs .dots{width:35px;display:flex}.sheettabs .dots::before{margin-left:20px}
.hscroll{display:flex;width:626px;height:15px;margin-left:1px}
.hscroll .sbtn{height:15px;width:15px}.hscroll .thumb{width:565px;background:#fdfdfd;border:1px solid #ababab}.hscroll .track{flex:1;background:#dadada}

.panel{width:261px;border-left:1px solid #b5b5b5;margin-top:2px;padding-left:12px;color:#444;font-size:11.6px}
.p-title{display:flex;align-items:center;height:48px;color:#217346;font-size:21px;font-weight:300;letter-spacing:-.25px;-webkit-text-stroke:.2px;padding-left:1px}
.p-title .caret{margin:-6px 31px 0 22px}.p-title span{width:155px}.p-title svg{margin-top:-6px}
.p-choose{display:flex;align-items:center;height:23px;justify-content:space-between;padding:0 15px 0 1px;margin-top:-1px}
.gear{width:44px;height:27px;border:1px solid #ababab;background:#fdfdfd;display:flex;align-items:center;justify-content:center;gap:7px;padding-left:3px}
.gear .caret{border-width:4px 4px 0}
.p-search{width:234px;height:20px;border:1px solid #ababab;background:#fdfdfd;margin-top:14px;display:flex;justify-content:space-between;align-items:center;padding:0 0 1px 1px;color:#666}
.p-list{width:234px;height:282px;background:#fdfdfd;margin-top:17px;padding-left:2px}
.p-list div{display:flex;align-items:center;height:19px;line-height:16px;gap:6px;padding-bottom:4px}
.p-list .bold{font-weight:600;color:#333}
.p-list .more{margin-top:8px}
.cb{width:13px;height:13px;border:1px solid #666;background:#fdfdfd;flex:none;display:block}
.cb svg{margin:1px 0 0 1px}
.p-drag{border-top:1px dotted #aaa;margin:16px 14px 0 1px;padding:4px 0 0 3px;height:34px;width:234px}
.areas{display:grid;grid-template-columns:118px 116px;width:234px;margin-left:2px;margin-top:3px}
.area{height:150px;position:relative}
.area h4{margin:0;font:inherit;display:flex;align-items:center;height:20px;padding:0 0 2px 4px;gap:7px}
.a1,.a3{border-right:1px solid #b5b5b5;padding-right:7px}.a1,.a2{border-bottom:1px solid #b5b5b5}.a2,.a4{padding-left:2px}
.a2 h4,.a4 h4{padding-left:5px}
.a3,.a4{padding-top:6px}
.box{background:#fdfdfd;height:124px;padding:2px 1px;display:flex;flex-direction:column;gap:2px}
.pill{height:19px;border:1px solid #b5b5b5;display:flex;align-items:center;justify-content:space-between;padding:0 9px 0 6px}
.pill .caret{border-width:4px 4px 0}
.p-defer{display:flex;align-items:center;margin:20px 14px 0 3px;height:22px;gap:6px}
.p-defer .cb{border-color:#999}
.p-defer span{margin-left:auto;background:#fdfdfd;color:#b5b5b5;height:22px;line-height:21px;width:46px;text-align:center;border:1px solid #e1e1e1;font-size:11.3px}

.status{height:22px;border-top:1px solid #c6c6c6;background:#f3f2f1;display:flex;align-items:center;font-size:11px;padding-left:8px}
.status>span:not(.vw):not(.slider){margin-top:-1px}
.ready{width:49px}.acc{margin-left:4px;width:1544px}
.vw{width:40px;height:21px;display:flex;align-items:center;justify-content:center}.vw.on{background:#d2d0ce}
.vw path{fill:none;stroke:#444;stroke-width:1.2}
.zm{font-size:17px;font-weight:300;width:13px;margin-left:5px;color:#222;line-height:12px}
.slider{width:101px;height:1px;background:#999;position:relative}.slider i{position:absolute;left:49px;top:-5px;width:5px;height:11px;background:#666}
.pct{margin-left:8px;font-size:11px}

.taskbar{height:40px;display:flex;background:linear-gradient(90deg,#dce8c8 0,#dfe6c8 22%,#e2e8c4 33%,#dfe0cc 44%,#e4dccb 56%,#dbe3c8 66%,#d8e5c6 75%,#e2e2cc 88%,#d9e3c4 100%)}
.start{width:48px;display:flex;align-items:center;justify-content:center}
.search{width:344px;background:#fff;border:1px solid #b9bfae;display:flex;align-items:center;font-size:14.3px;color:#333;padding-left:11px}
.search>span{margin-left:12px;width:227px;letter-spacing:-.2px}
.app{width:49px;height:40px;display:flex;align-items:center;justify-content:center}
.search+.app{margin-left:2px}
.run{background:linear-gradient(#0078d7,#0078d7) center bottom/40px 2px no-repeat}
.run.active{background:linear-gradient(#0078d7,#0078d7) center bottom/48px 2px no-repeat,#f3f5e8;width:48px}
.adobe{width:23px;height:22px;border:2px solid #31c5f0;background:#001d26;color:#fff;border-radius:3px;font-size:13px;font-weight:600;line-height:17px;text-align:center}
.adobe.ai{border-color:#ff7c00;background:#261300;color:#ff7c00;border-radius:0}
.tray{margin-left:auto;display:flex;align-items:center;padding-right:4px;margin-right:4px;border-right:1px solid #aab598}
.tray svg{margin-right:9px;margin-top:1px}
.tray svg:nth-child(3){margin-right:7px}.tray svg:nth-child(4){margin-right:1px}
.clock{width:70px;text-align:center;line-height:18px;color:#111;font-size:11.8px;padding-bottom:3px;margin-left:1px}
.clock+svg{margin:0 15px 0 9px!important}
.watermark{position:absolute;left:1599px;top:945px;color:rgba(140,140,140,.75);display:flex;flex-direction:column}
.watermark b{font-weight:400;font-size:19px;line-height:26px}.watermark span{font-size:14.350px;line-height:20px}
```
FILE: app.js
```js
const COLS = 'ABCDEFGHIJKLMNOPQRS'.split('');
const cars = `Honda|Accord|Red|63,512|$4,000|$3,000|$1,000
Honda|Accord|Blue|95,135|$2,500|$2,000|$500
Honda|Accord|Silver|101,354|$2,000|$1,500|$500
Toyota|Camry|Black|75,006|$2,198|$1,900|$298
Nissan|Altima|Green|69,847|$3,826|$3,000|$826
Nissan|Altima|Green|55,233|$2,970|$2,500|$470
Toyota|Corolla|Black|87,278|$2,224|$2,100|$124
Toyota|Corolla|Blue|130,684|$2,798|$2,200|$598
Toyota|Corolla|Silver|59,169|$2,160|$2,000|$160
Honda|Civic|White|138,789|$2,723|$1,900|$823
Ford|F-150|Black|89,073|$3,950|$3,000|$950
Chevrolet|Silverado|Green|109,231|$4,959|$4,500|$459
Chevrolet|Impala|Silver|87,675|$3,791|$3,500|$291
Chevrolet|Impala|White|140,811|$2,340|$2,000|$340
Chevrolet|Malibu|White|139,300|$3,361|$3,000|$361
Ford|Escape|Black|63,259|$3,196|$3,050|$146
Ford|Escape|Red|40,826|$4,397|$3,900|$497
Ford|Mustang|Silver|41,560|$3,706|$3,100|$606
Honda|CRV|Blue|49,326|$4,745|$4,100|$645
Nissan|Maxima|Red|101,856|$2,914|$2,500|$414
Ford|Fusion|Black|42,542|$2,659|$2,100|$559
Dodge|Charger|Silver|34,853|$4,349|$3,500|$849
Dodge|Charger|Silver|58,173|$4,252|$4,000|$252
Dodge|Charger|Black|136,775|$2,090|$1,800|$290`.split('\n').map(l => l.split('|'));

/* label, Black, Blue, Green, Red, Silver, White, Grand Total */
const pivot = `Count of Make|Colum||||||
Row Labels|Black|Blue|Green|Red|Silver|White|Grand Total
+Chevrolet|||1||1|2|4
Impala|||||1|1|2
Malibu||||||1|1
Silverado|||1||||1
+Dodge|1||||2||3
Charger|1||||2||3
+Ford|3|||1|1||5
Escape|1|||1|||2
F-150|1||||||1
Fusion|1||||||1
Mustang|||||1||1
+Honda||2||1|1|1|5
Accord||1||1|1||3
Civic||||||1|1
CRV||1|||||1
+Nissan|||2|1|||3
Altima|||2||||2
Maxima||||1|||1
+Toyota|2|1|||1||4
Camry|1||||||1
Corolla|1|1|||1||3
Grand Total|6|3|3|3|6|3|24`.split('\n').map(l => l.split('|'));
const header = ['Make', 'Model', 'Color', 'Mileage', 'Price', 'Cost', 'IF(red="red",10%,5%', 'Margin'];
const drop = '<span class="dd"><i class="caret"></i></span>';

let html = '<div class="corner"><i></i></div>' + COLS.map(c => `<div class="ch c-${c}">${c}</div>`).join('');
for (let r = 1; r <= 30; r++) {
  html += `<div class="rh r${r}">${r < 30 ? r : ''}</div>`;
  for (let i = 0; i < COLS.length; i++) {
    const c = COLS[i];
    let cls = `r${r} c-${c}`, text = '';
    if (c === 'A' && r >= 3 && r <= 27) cls += ' pre';
    if (r === 2 && i >= 1 && i <= 8) cls += ' hb';
    if (r === 3 && i >= 1 && i <= 8) { cls += ' hd'; text = header[i - 1]; }
    if (r >= 4 && r <= 27) {
      const car = cars[r - 4], red = car[2] === 'Red';
      if (i >= 1 && i <= 6) { cls += ' src' + (c === 'D' && red ? ' red' : ''); text = car[i - 1]; }
      if (c === 'H') { cls += ' fh' + (red ? ' red' : ''); text = red ? '10%' : '5%'; }
      if (c === 'I') { cls += ' mg'; text = car[6]; }
      if (i >= 9 && i <= 16) {
        const row = pivot[r - 4], group = row[0][0] === '+';
        cls += ' pv';
        if ((group && !(r === 6 && c === 'P')) || r < 6 || r === 27) cls += ' bold';
        if (group || r === 5 || r === 26) cls += ' ul';
        text = row[i - 9];
        if (c === 'J' && group) text = '<i class="exp"></i>' + text.slice(1);
        if (r === 5 && c === 'J') text += drop;
        if (r === 4 && c === 'K') text = '<span class="clip">' + text + '</span>' + drop;
      }
    }
    if (r === 29 && c === 'I') { cls += ' note'; text = 'Margin = Price - Cost'; i += 2; }
    if (r === 29 && c === 'N') { cls += ' link'; text = 'pivot-color'; i += 1; }
    html += `<div class="${cls}">${text}</div>`;
  }
}
document.getElementById('sheet').innerHTML = html + '<div class="cursor"></div>';

const tick = '<svg width="10" height="10"><path d="M1 5l3 3.500L9 1.500" fill="none" stroke="#555" stroke-width="1.600"/></svg>';
document.getElementById('fields').innerHTML = ['Make', 'Model', 'Color', 'Mileage', 'Price', 'Cost']
  .map((f, i) => `<div class="${i < 3 ? 'bold' : ''}"><i class="cb">${i < 3 ? tick : ''}</i>${f}</div>`).join('') + '<div class="more">More Tables...</div>';
```
